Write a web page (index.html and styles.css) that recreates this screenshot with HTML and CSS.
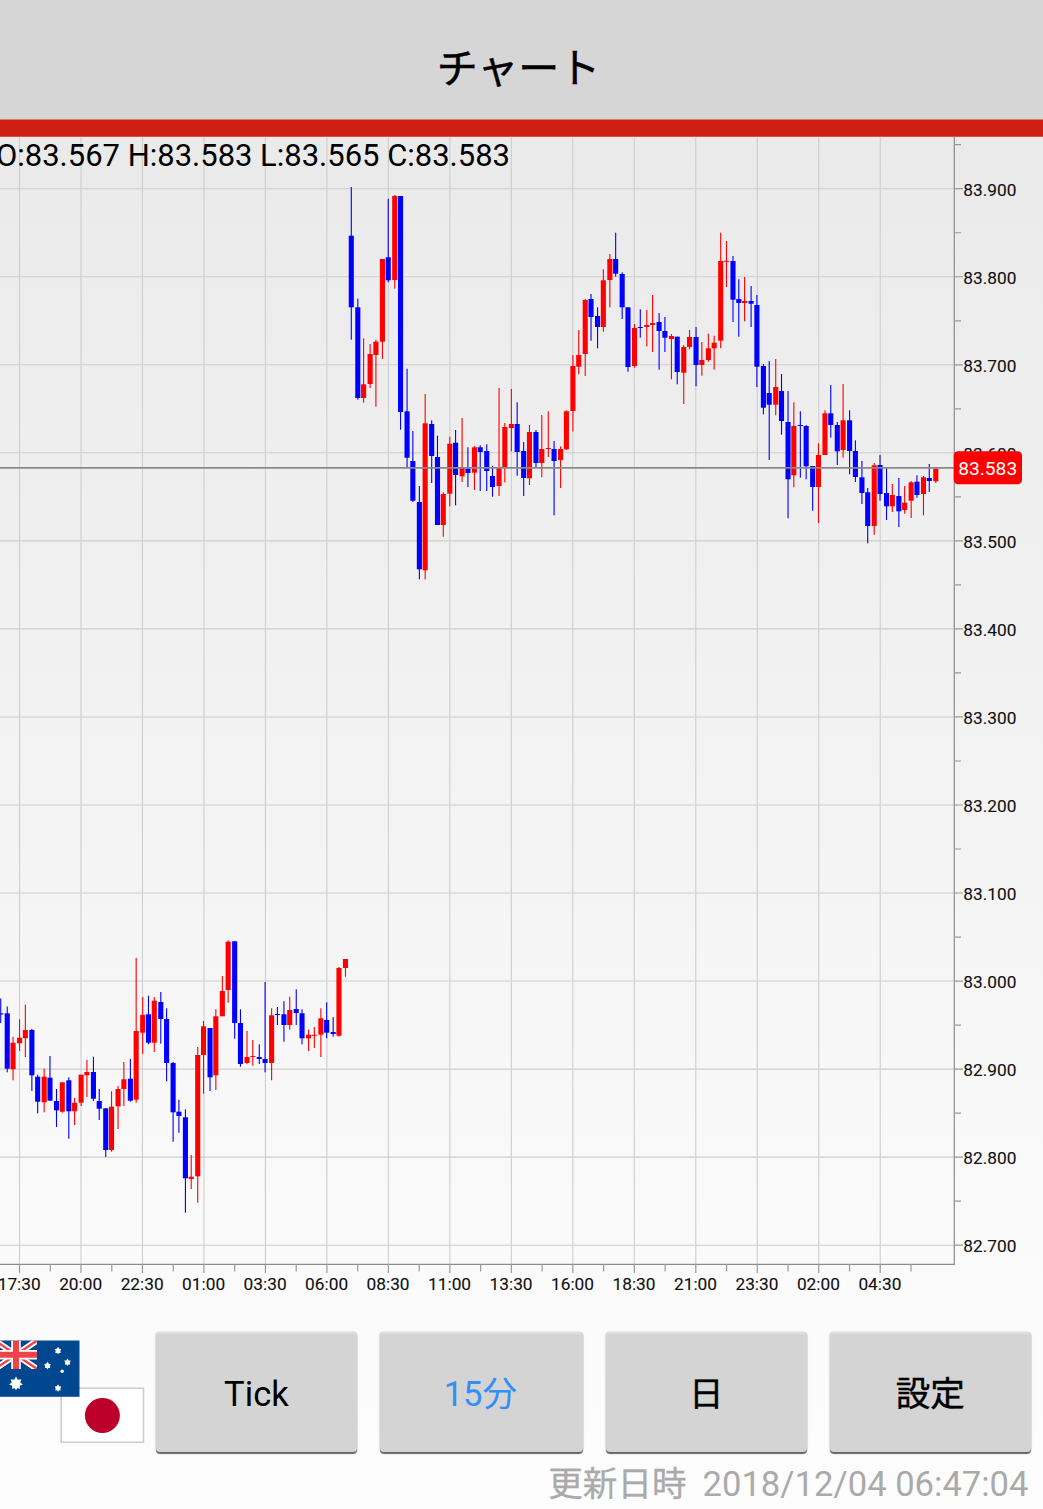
FILE: index.html
```html
<!DOCTYPE html>
<html lang="ja">
<head>
<meta charset="utf-8">
<title>チャート</title>
<link rel="stylesheet" href="styles.css">
</head>
<body>
<div class="screen">
  <header class="header"><h1 class="title">チャート</h1></header>
  <main class="chart-area">
    <svg class="chart" viewBox="0 137 1043 1177" width="1043" height="1177">
      <g id="grid"></g>
      <g id="candles"></g>
      <g id="axes"></g>
      <path class="price-line" d="M0 467.8H954"/>
      <text class="ohlc" x="-4" y="166" textLength="514" lengthAdjust="spacingAndGlyphs">O:83.567 H:83.583 L:83.565 C:83.583</text>
      <rect class="price-tag" x="953.7" y="451.2" width="68.3" height="33" rx="4.5"/>
      <text class="price-text" x="987.7" y="474.8">83.583</text>
    </svg>
  </main>
  <nav class="toolbar">
    <div class="pair">
      <svg class="flags" viewBox="0 0 150 122" width="150" height="122">
        <rect class="jp-field" x="61.2" y="57.2" width="82.3" height="54"/>
        <circle class="jp-sun" cx="102.4" cy="84.5" r="17.5"/>
        <rect class="au-field" x="-5" y="9.5" width="84.5" height="56.3"/>
        <svg x="-5" y="9.5" width="42" height="28.5" viewBox="0 0 42 28.5">
          <path class="saltire-white" d="M0 0L42 28.5M42 0L0 28.5"/>
          <path class="saltire-red" d="M0 0L42 28.5M42 0L0 28.5"/>
          <path class="cross-white" d="M21 0V28.5M0 14.2H42"/>
          <path class="cross-red" d="M21 0V28.5M0 14.2H42"/>
        </svg>
        <path class="star" d="M16 45.5l1.8 3.2 3.6-.4-1.2 3.2 2.7 2-3.2 1.2.2 3.3-2.4-1.1-1.5 2.3-1.5-2.3-2.4 1.1.2-3.3-3.2-1.2 2.7-2-1.2-3.2 3.6.4z"/>
        <g class="star">
          <path d="M58 15.8l1.2 2 2.1.2-1 2 .4 2-1.9-.1-.8 1.6-.8-1.6-1.9.1.4-2-1-2 2.1-.2z"/>
          <path d="M47.5 30.8l1.2 2 2.1.2-1 2 .4 2-1.9-.1-.8 1.6-.8-1.6-1.9.1.4-2-1-2 2.1-.2z"/>
          <path d="M67.5 27.4l1.2 2 2.1.2-1 2 .4 2-1.9-.1-.8 1.6-.8-1.6-1.9.1.4-2-1-2 2.1-.2z"/>
          <path d="M58 53.2l1.2 2 2.1.2-1 2 .4 2-1.9-.1-.8 1.6-.8-1.6-1.9.1.4-2-1-2 2.1-.2z"/>
          <circle cx="62.2" cy="40.2" r="1.7"/>
        </g>
      </svg>
    </div>
    <button class="btn">Tick</button>
    <button class="btn btn-cjk btn-active">15分</button>
    <button class="btn btn-cjk">日</button>
    <button class="btn btn-cjk">設定</button>
  </nav>
  <footer class="updated"><span class="updated-label">更新日時</span><span>2018/12/04 06:47:04</span></footer>
</div>
<script src="chart.js"></script>
</body>
</html>
```
FILE: styles.css
```css
* { box-sizing: border-box; }
body {
  margin: 0;
  font-family: Roboto, "Noto Sans CJK JP", sans-serif;
  color: #000;
}
.screen {
  display: flex;
  flex-direction: column;
  width: 1043px;
  height: 1509px;
  overflow: hidden;
  background: linear-gradient(#eaeaea 137px, #f2f2f2 720px, #fafafa 1250px, #fdfdfd);
}
.header {
  display: flex;
  align-items: center;
  justify-content: center;
  flex: none;
  height: 137px;
  padding-right: 6px;
  background: linear-gradient(#d6d6d6 119.4px, #cf1e14 119.6px, #cf1e14 136.4px, #eaeaea 136.8px);
}
.title {
  margin: 0;
  font-size: 41px;
  font-weight: 400;
  line-height: 60px;
  -webkit-text-stroke: .5px #000;
}
.chart-area { flex: none; height: 1177px; }
.chart { display: block; }
.grid-line { stroke: #cecece; stroke-width: 1.1; fill: none; }
.axis { stroke: #8c8c8c; stroke-width: 1.2; fill: none; }
.tick { stroke: #999; stroke-width: 1.2; fill: none; }
.up { fill: #f00; }
.down { fill: #00f; }
.label { font-size: 17.3px; fill: #111; stroke: #111; stroke-width: .12px; }
.time { text-anchor: middle; }
.ohlc { font-size: 31.8px; }
.price-line { stroke: #888; stroke-width: 1.7; }
.price-tag { fill: #f00; }
.price-text { font-size: 19.2px; fill: #fff; text-anchor: middle; }
.toolbar {
  display: flex;
  flex: none;
  height: 139px;
  padding: 18px 12.5px 0 0;
  gap: 23.7px;
}
.pair { flex: none; width: 132.6px; margin-top: -1px; }
.flags { display: block; }
.jp-field { fill: #fff; stroke: #ccc; stroke-width: 1.5; }
.jp-sun { fill: #bd0029; }
.au-field { fill: #00478f; }
.saltire-white { stroke: #fff; stroke-width: 6; }
.saltire-red { stroke: #f04349; stroke-width: 2.4; }
.cross-white { stroke: #fff; stroke-width: 9.5; fill: none; }
.cross-red { stroke: #f04349; stroke-width: 6; fill: none; }
.star { fill: #fff; }
.btn {
  flex: 1 1 0;
  min-width: 0;
  height: 120px;
  padding: 3px 0 0;
  border: 0;
  border-radius: 4px;
  background: #d4d4d4;
  box-shadow: 0 1.5px 1px #666, 0 0 1.5px #aaa, inset 0 2px 1px #dedede;
  font: inherit;
  font-size: 34.6px;
  color: #000;
}
.btn-cjk {
  padding: 0 0 3px;
  -webkit-text-stroke: .4px;
}
.btn-active {
  padding-right: 2px;
  color: #338ff5;
  -webkit-text-stroke: 0;
}
.updated {
  display: flex;
  justify-content: flex-end;
  gap: 16px;
  padding: 3px 14.5px 0 0;
  font-size: 34.6px;
  line-height: 56px;
  color: #aaa;
}
.updated-label { -webkit-text-stroke: .3px; }
```
FILE: chart.js
```js
// One row per 15-minute candle: direction, high, body top, body bottom, low.
const rows = `
B 998.5 1013.3 1014.5 1023|B 1006.5 1013.3 1068.7 1072.3|R 1036.7 1042.7 1069.3 1080.3|R 1019.3 1037.7 1043.3 1051
R 1004.5 1030 1038.3 1057|B 1029 1030 1075.3 1091|B 1074.7 1076.7 1101.7 1113.3|R 1068.7 1076.7 1102.3 1112.3
B 1056 1077.7 1100.7 1100.7|B 1089 1101 1110.3 1127|R 1082.3 1082.3 1111.7 1112.7|B 1077.3 1080.3 1111.3 1138.7
R 1098 1102.7 1111.3 1125|R 1074.7 1074.7 1102.7 1106|R 1060 1072 1075.3 1097|B 1056.7 1072 1098.7 1101
B 1089 1101 1108.7 1120|B 1108.3 1108.3 1150 1157|R 1091.3 1106.7 1150 1151.7|R 1086 1089 1106.3 1129
R 1062 1079.3 1089 1106|B 1059 1078.7 1100.7 1101.7|R 958 1031 1099.7 1102.7|R 997 1015 1032.7 1054
B 995.7 1014.3 1042.7 1044.3|R 997 1000.7 1042.7 1052|B 992 1002 1019 1043.7|B 1008.3 1019 1063 1081.3
B 1062 1063 1112.3 1141.7|B 1099.7 1111.7 1116 1132.7|B 1109.3 1117.3 1178.3 1212.7|R 1155 1176.7 1179 1189
R 1047 1055 1176.3 1202.7|R 1021 1026.3 1055 1093.7|B 1028 1028 1077.3 1091|R 1009.3 1016.3 1075.3 1090
R 976 991 1016.3 1016.3|R 940.3 941.7 990 1002.7|B 941.3 941.3 1023 1038.7|B 1009.3 1023 1064 1066.7
R 1031 1057 1063 1064|R 1040 1056 1057 1065.7|B 1044.3 1057 1059 1064|B 982 1059 1063 1072.3
R 1008.3 1015.3 1063 1080.3|B 1007 1014 1015 1025|B 1001.3 1014.3 1025 1041.7|R 996.7 1010 1025 1029.7
B 989.3 1009 1013 1025|B 1009.3 1013.3 1038.3 1044.3|R 1029.7 1034.7 1038.3 1051|R 1027 1034.8 1035.8 1048
R 1008.3 1018.3 1034.7 1057|B 1002.3 1020 1032.7 1038.3|B 1017 1032 1034 1036.7|R 967 968 1035.7 1036.7
R 959 959 968 976.7|B 187 235.7 307.3 339.7|B 298.7 307.3 398 399.7|R 338.3 384.3 398 402.7
R 344 354 384 388|R 339.7 341.7 355 406.7|R 259 259 341.7 359|B 198.7 257.3 280.3 282.3
R 195 196 280 288.7|B 196 196 412 429.7|B 368.7 411.3 457.7 467|B 431 461 500.7 502
B 486 502 569.3 579.3|R 394 423.3 570.3 579.3|B 420.3 424 456 483|B 435.7 457 525 525
R 492.3 494 525 536.7|R 436.7 443.7 493.7 506.3|B 430 442.7 475 505.3|R 418 467.7 476.3 482
B 447.3 468.5 473 487|R 446 447.3 472.7 490|B 445.3 447.3 452 491|B 444.3 451 471 491
B 465.7 476 487 496.7|R 388 468 486 496|R 423 427 467.3 482.3|R 389 424 428 451.3
B 402.3 424 452 475.7|B 442 451 478 496|R 425 432 478.3 485|B 430 432 463 467
R 415 449 463 477.3|R 411.3 448 449 457|B 441 449 461 515.3|R 446.3 449 460 488
R 410.3 411.3 449.3 450|R 355 366 411 431.5|R 330 355 366.7 374.3|R 299 300 354 376
B 294 299 317 340.7|B 307.3 316 327 348.3|R 269.3 280.3 327 331.7|R 254 259 280 307.3
B 232.7 259 273.7 276.7|B 272.3 274 307.3 319|B 307.3 307.3 367 371.7|R 324 328 366 367.7
B 309.3 327 328 337.7|R 310 325 327 346.3|R 295 323 325 352|B 313 322 331 369.7
B 317 331 337.7 352|R 334 336 339 379.3|B 336.7 336.7 372 384.3|R 345 347 372.7 404
R 330 337 347 349.3|B 327 337 365 386.3|R 342 360 365 375.7|R 333.7 348.3 360 361.7
R 335.7 342.7 348.3 369.7|R 232.7 261 340.7 348.3|R 241 260.8 261.8 287|B 256 261 299.7 322
B 279.3 299 303 336.7|R 277 301 303 321.3|B 286 301 303.7 327|B 295 305 366.7 387
B 364 366 407.7 414.3|B 361 393 404.7 460|R 359 387 404.7 415.3|B 374 391 421 434.7
B 391 422 479.3 518.3|R 402.3 426 475.3 487.3|B 411.3 425 426 477.7|B 425 426 466.3 479.3
B 466 466 487 510.7|R 443.3 455 487 523|R 410.3 413.3 455 455|B 385 413.3 425 437.7
B 422 425 451.3 465|R 384 420.3 450 457.7|B 410.3 420.3 451 474.3|B 440.3 451 477 482
B 461 477.3 493 504|B 488 492.3 526 543.3|R 463 465.3 526 534.7|B 455 465 494 500.7
B 468 493 506.3 520|R 484 495 506.3 512|B 478 496 511.3 527|R 486 502.7 510 513.7
R 481 482.3 500.7 518|B 475.3 481.7 495 497.7|R 476 477.3 494 515.3|B 464 478 481 492
R 468.7 468.7 481.3 483`.trim().split(/[|\n]/);

const STEP = 6.149;
const UNIT = 0.7243;

document.getElementById('candles').innerHTML = rows.map((row, i) => {
  const [dir, ...v] = row.split(' ');
  const [high, top, bottom, low] = v.map(Number);
  const x = Math.round((0.9 + STEP * i) / UNIT) * UNIT;
  const h = Math.max(bottom - top, 1);
  return `<g class="${dir === 'R' ? 'up' : 'down'}">` +
    `<rect x="${(x - 0.55).toFixed(2)}" y="${high}" width="1.1" height="${(low - high).toFixed(1)}"/>` +
    `<rect x="${(x - 2.55).toFixed(2)}" y="${top}" width="5.1" height="${h.toFixed(1)}"/></g>`;
}).join('');

let grid = '';
let axes = '<path class="axis" d="M954.3 137V1264.3M0 1264.3H954.9"/>';

for (let k = 0; k <= 12; k++) {
  const y = 188.7 + 88.04 * k;
  grid += `<path class="grid-line" d="M0 ${y}H954"/>`;
  axes += `<path class="tick" d="M954 ${y}H963M954 ${y - 44}H961"/>`;
  axes += `<text class="label" x="963.3" y="${y + 7.2}">${(83.9 - k / 10).toFixed(3)}</text>`;
}

const times = ['17:30', '20:00', '22:30', '01:00', '03:30', '06:00', '08:30', '11:00',
  '13:30', '16:00', '18:30', '21:00', '23:30', '02:00', '04:30'];
times.forEach((time, k) => {
  const x = 19.5 + 61.48 * k;
  grid += `<path class="grid-line" d="M${x} 137V1264"/>`;
  axes += `<path class="tick" d="M${x} 1264V1273M${x + 30.8} 1264V1271.5"/>`;
  axes += `<text class="label time" x="${x - 0.3}" y="1289.8">${time}</text>`;
});

document.getElementById('grid').innerHTML = grid;
document.getElementById('axes').innerHTML = axes;
```
